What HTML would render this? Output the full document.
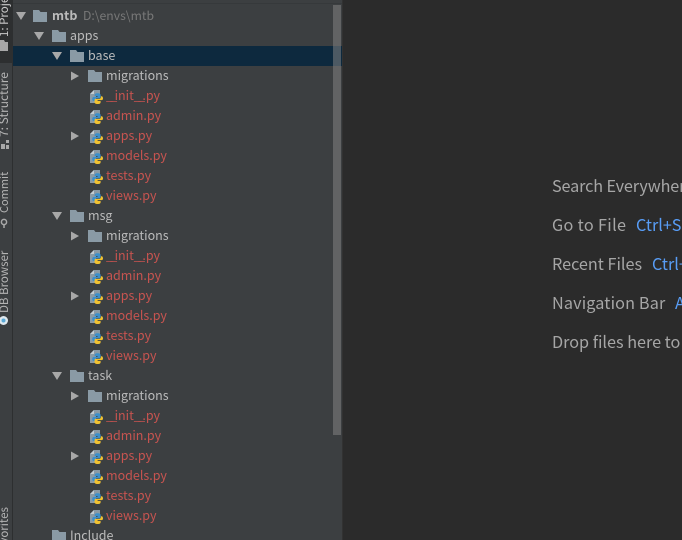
<!DOCTYPE html>
<html><head><meta charset="utf-8">
<style>
html,body{margin:0;padding:0;width:682px;height:540px;overflow:hidden;background:#2b2b2b}
*{box-sizing:border-box}
body{font-family:"Noto Sans CJK SC","Liberation Sans",sans-serif;position:relative}
#bar{position:absolute;left:0;top:0;width:13px;height:540px;background:#3c3f41;border-right:1px solid #2d2f30;overflow:hidden}
#barsel{position:absolute;left:0;top:0;width:12px;height:63px;background:#2d2f30}
.v{position:absolute;left:4px;color:#b4b4b4;font-size:11.5px;line-height:12px;white-space:nowrap;transform-origin:0 0;transform:rotate(-90deg) translateY(-6px);}
#panel{position:absolute;left:13px;top:0;width:329px;height:540px;background:#3c3f41;overflow:hidden}
#right{position:absolute;left:342px;top:0;width:340px;height:540px;background:#2b2b2b;border-left:1px solid #323232;overflow:hidden}
#top{position:absolute;left:0;top:0;width:329px;height:4px;background:#3c3f41;border-bottom:1px solid #36393b}
#sel{position:absolute;left:0;top:46px;width:329px;height:20px;background:#0d293e}
#sb{position:absolute;left:320px;top:5px;width:8px;height:430px;background:rgba(130,130,130,.55)}
.t{position:absolute;font-size:12.5px;line-height:20px;height:20px;white-space:nowrap;color:#bbbbbb;margin-top:-1px}
.r{color:#c75450}
.r u{text-decoration:none;letter-spacing:-2.7px}
.g{color:#787878;font-size:12.2px}
.w{position:absolute;left:209px;font-size:16.2px;line-height:24px;height:24px;white-space:nowrap;color:#a6a6a6;width:340px;overflow:hidden}
.w b{font-weight:400;color:#589df6;position:absolute;top:0}
svg.i{position:absolute;overflow:visible}
</style></head><body>
<svg width="0" height="0" style="position:absolute">
<defs>
<symbol id="f" viewBox="0 0 14 12"><path d="M0 0H6L7.5 2H14V12H0Z" fill="#8a9aa5"/></symbol>
<symbol id="d" viewBox="0 0 10 10"><path d="M0 1H10L5 9Z" fill="#a8a8a8"/></symbol>
<symbol id="a" viewBox="0 0 10 10"><path d="M1 0.5V9.500L9 5Z" fill="#a8a8a8"/></symbol>
<symbol id="p" viewBox="0 0 14 15">
<path d="M4 1H10V7H6V14H0V5Z" fill="#8a9aa5"/><path d="M4 1V5H0Z" fill="#c4ccd1"/>
<g transform="translate(-2.600 -3) scale(1.200)">
<path d="M8.500 6C6.500 6 6 6.800 6 7.500V8.500H8.500V9.200H5.200C4.300 9.200 4 10 4 10.700C4 11.800 4.500 12.500 5.200 12.500H6V11.500C6 10.800 6.500 10.300 7.200 10.300H9.800C10.500 10.300 11 9.800 11 9.200V7.500C11 6.800 10.300 6 8.500 6Z" fill="#3c8fc9"/>
<path d="M8.500 15C10.500 15 11 14.200 11 13.500V12.500H8.500V11.800H11.800C12.700 11.800 13 11 13 10.300C13 9.200 12.500 8.500 11.800 8.500H11.200V9.500C11.200 10.200 10.500 10.700 9.800 10.700H7.200C6.500 10.700 6 11.200 6 11.800V13.500C6 14.200 6.700 15 8.500 15Z" fill="#f2c230"/>
</g>
</symbol>
</defs>
</svg>

<div id="bar">
<div id="barsel"></div>
<div class="v" style="top:37px;color:#c8c8c8">1: Project</div>
<svg class="i" style="left:0;top:40px" width="9" height="12"><path d="M0 0H4L5 2H8V11H0Z" fill="#a8a8a8"/></svg>
<div class="v" style="top:137px;font-size:12px">7: Structure</div>
<svg class="i" style="left:1px;top:140px" width="9" height="10"><path d="M0 4H4V9H0ZM5 0H8V3H5ZM5 5H8V9H5Z" fill="#a8a8a8"/></svg>
<div class="v" style="top:213px;font-size:11px">Commit</div>
<svg class="i" style="left:0;top:218px" width="10" height="10"><circle cx="4" cy="4" r="2.600" fill="none" stroke="#a8a8a8" stroke-width="1.500"/><path d="M4 7V10" stroke="#a8a8a8" stroke-width="1.500"/></svg>
<div class="v" style="top:313px">DB Browser</div>
<svg class="i" style="left:0;top:315px" width="10" height="12"><circle cx="3.500" cy="5.500" r="4.500" fill="#dfe8ee"/><circle cx="3.500" cy="5.500" r="2" fill="#5aa9d6"/></svg>
<div class="v" style="top:556px">Favorites</div>
</div>

<div id="panel">
<div id="top"></div>
<div id="sel"></div>
<div id="sb"></div>
<svg class="i" style="left:3px;top:11px" width="10" height="10"><use href="#d"/></svg>
<svg class="i" style="left:20px;top:10px" width="14" height="12"><use href="#f"/></svg>
<div class="t" style="left:39px;top:6px;font-weight:700">mtb</div>
<div class="t g" style="left:70px;top:6px">D:\envs\mtb</div>
<svg class="i" style="left:21px;top:31px" width="10" height="10"><use href="#d"/></svg>
<svg class="i" style="left:39px;top:30px" width="14" height="12"><use href="#f"/></svg>
<div class="t" style="left:57px;top:26px">apps</div>

<svg class="i" style="left:39px;top:51px" width="10" height="10"><use href="#d"/></svg>
<svg class="i" style="left:57px;top:50px" width="14" height="12"><use href="#f"/></svg>
<div class="t" style="left:75px;top:46px">base</div>
<svg class="i" style="left:57px;top:71px" width="10" height="10"><use href="#a"/></svg>
<svg class="i" style="left:75px;top:70px" width="14" height="12"><use href="#f"/></svg>
<div class="t" style="left:93px;top:66px">migrations</div>
<svg class="i" style="left:77px;top:89px" width="14" height="15"><use href="#p"/></svg>
<div class="t r" style="left:93px;top:86px"><u>__</u>init<u>__</u>.py</div>
<svg class="i" style="left:77px;top:109px" width="14" height="15"><use href="#p"/></svg>
<div class="t r" style="left:93px;top:106px">admin.py</div>
<svg class="i" style="left:57px;top:131px" width="10" height="10"><use href="#a"/></svg>
<svg class="i" style="left:77px;top:129px" width="14" height="15"><use href="#p"/></svg>
<div class="t r" style="left:93px;top:126px">apps.py</div>
<svg class="i" style="left:77px;top:149px" width="14" height="15"><use href="#p"/></svg>
<div class="t r" style="left:93px;top:146px">models.py</div>
<svg class="i" style="left:77px;top:169px" width="14" height="15"><use href="#p"/></svg>
<div class="t r" style="left:93px;top:166px">tests.py</div>
<svg class="i" style="left:77px;top:189px" width="14" height="15"><use href="#p"/></svg>
<div class="t r" style="left:93px;top:186px">views.py</div>

<svg class="i" style="left:39px;top:211px" width="10" height="10"><use href="#d"/></svg>
<svg class="i" style="left:57px;top:210px" width="14" height="12"><use href="#f"/></svg>
<div class="t" style="left:75px;top:206px">msg</div>
<svg class="i" style="left:57px;top:231px" width="10" height="10"><use href="#a"/></svg>
<svg class="i" style="left:75px;top:230px" width="14" height="12"><use href="#f"/></svg>
<div class="t" style="left:93px;top:226px">migrations</div>
<svg class="i" style="left:77px;top:249px" width="14" height="15"><use href="#p"/></svg>
<div class="t r" style="left:93px;top:246px"><u>__</u>init<u>__</u>.py</div>
<svg class="i" style="left:77px;top:269px" width="14" height="15"><use href="#p"/></svg>
<div class="t r" style="left:93px;top:266px">admin.py</div>
<svg class="i" style="left:57px;top:291px" width="10" height="10"><use href="#a"/></svg>
<svg class="i" style="left:77px;top:289px" width="14" height="15"><use href="#p"/></svg>
<div class="t r" style="left:93px;top:286px">apps.py</div>
<svg class="i" style="left:77px;top:309px" width="14" height="15"><use href="#p"/></svg>
<div class="t r" style="left:93px;top:306px">models.py</div>
<svg class="i" style="left:77px;top:329px" width="14" height="15"><use href="#p"/></svg>
<div class="t r" style="left:93px;top:326px">tests.py</div>
<svg class="i" style="left:77px;top:349px" width="14" height="15"><use href="#p"/></svg>
<div class="t r" style="left:93px;top:346px">views.py</div>

<svg class="i" style="left:39px;top:371px" width="10" height="10"><use href="#d"/></svg>
<svg class="i" style="left:57px;top:370px" width="14" height="12"><use href="#f"/></svg>
<div class="t" style="left:75px;top:366px">task</div>
<svg class="i" style="left:57px;top:391px" width="10" height="10"><use href="#a"/></svg>
<svg class="i" style="left:75px;top:390px" width="14" height="12"><use href="#f"/></svg>
<div class="t" style="left:93px;top:386px">migrations</div>
<svg class="i" style="left:77px;top:409px" width="14" height="15"><use href="#p"/></svg>
<div class="t r" style="left:93px;top:406px"><u>__</u>init<u>__</u>.py</div>
<svg class="i" style="left:77px;top:429px" width="14" height="15"><use href="#p"/></svg>
<div class="t r" style="left:93px;top:426px">admin.py</div>
<svg class="i" style="left:57px;top:451px" width="10" height="10"><use href="#a"/></svg>
<svg class="i" style="left:77px;top:449px" width="14" height="15"><use href="#p"/></svg>
<div class="t r" style="left:93px;top:446px">apps.py</div>
<svg class="i" style="left:77px;top:469px" width="14" height="15"><use href="#p"/></svg>
<div class="t r" style="left:93px;top:466px">models.py</div>
<svg class="i" style="left:77px;top:489px" width="14" height="15"><use href="#p"/></svg>
<div class="t r" style="left:93px;top:486px">tests.py</div>
<svg class="i" style="left:77px;top:509px" width="14" height="15"><use href="#p"/></svg>
<div class="t r" style="left:93px;top:506px">views.py</div>

<svg class="i" style="left:39px;top:530px" width="14" height="12"><use href="#f"/></svg>
<div class="t" style="left:57px;top:526px">Include</div>
</div>

<div id="right">
<div class="w" style="top:173px"><span style="letter-spacing:-.12px">Search Everywhere</span></div>
<div class="w" style="top:212px"><span style="letter-spacing:.35px">Go to File</span><b style="left:84px">Ctrl+Shift+N</b></div>
<div class="w" style="top:251px">Recent Files<b style="left:100px">Ctrl+E</b></div>
<div class="w" style="top:290px"><span style="letter-spacing:.15px">Navigation Bar</span><b style="left:123px">Alt+Home</b></div>
<div class="w" style="top:329px">Drop files here to open</div>
</div>
</body></html>
